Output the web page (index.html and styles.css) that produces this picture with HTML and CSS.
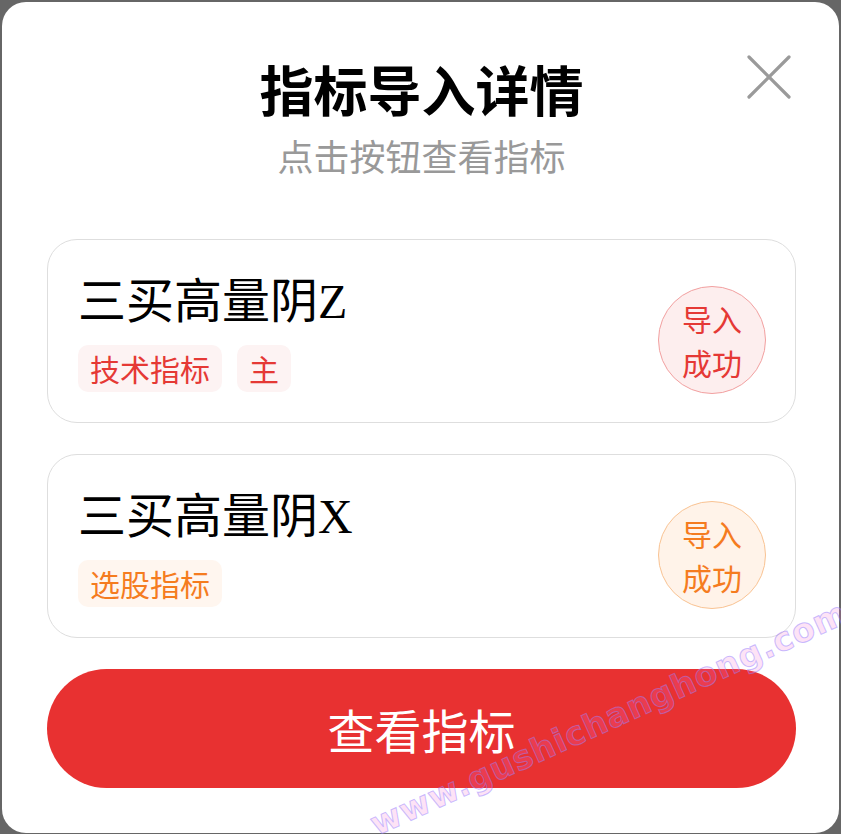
FILE: index.html
```html
<!DOCTYPE html>
<html lang="zh">
<head>
    <meta charset="UTF-8">
    <meta name="viewport" content="width=device-width, initial-scale=1.0">
    <title>指标导入详情</title>
    <link rel="stylesheet" href="styles.css">
</head>
<body>
    <div class="modal">
        <button class="close" aria-label="关闭">
            <svg width="44" height="44" viewBox="0 0 44 44">
                <path d="M2 2 L42 42 M42 2 L2 42" stroke="#9a9a9a" stroke-width="3.2" stroke-linecap="round" fill="none"/>
            </svg>
        </button>
        <h1 class="title">指标导入详情</h1>
        <p class="subtitle">点击按钮查看指标</p>

        <div class="card">
            <div class="info">
                <div class="name">三买高量阴Z</div>
                <div class="tags">
                    <span class="tag red">技术指标</span>
                    <span class="tag red">主</span>
                </div>
            </div>
            <div class="badge red">导入<br>成功</div>
        </div>

        <div class="card">
            <div class="info">
                <div class="name">三买高量阴X</div>
                <div class="tags">
                    <span class="tag orange">选股指标</span>
                </div>
            </div>
            <div class="badge orange">导入<br>成功</div>
        </div>

        <button class="view-btn">查看指标</button>
    </div>
    <div class="watermark">www.gushichanghong.com</div>
</body>
</html>
```

FILE: styles.css
```css
body {
    margin: 0;
    background-color: #666;
    font-family: "Noto Sans CJK SC", "Noto Sans", sans-serif;
    overflow: hidden;
}
.modal {
    position: relative;
    box-sizing: border-box;
    width: 837px;
    height: 831px;
    margin: 2px 0 0 2px;
    padding: 54px 43px 0 45px;
    background-color: #fff;
    border-radius: 24px;
}
.close {
    position: absolute;
    top: 53px;
    right: 48px;
    width: 44px;
    height: 44px;
    padding: 0;
    border: none;
    background: none;
}
.close svg {
    display: block;
}
.title {
    margin: 0;
    text-align: center;
    font-size: 54px;
    line-height: 65px;
    font-weight: 700;
    color: #000;
}
.subtitle {
    margin: 13px 0 0;
    text-align: center;
    font-size: 36px;
    line-height: 43px;
    color: #999;
}
.card {
    display: flex;
    align-items: center;
    justify-content: space-between;
    box-sizing: border-box;
    height: 184px;
    margin-top: 62px;
    padding: 32px 29px 30px 30px;
    border: 1px solid #dedede;
    border-radius: 30px;
}
.card + .card {
    margin-top: 31px;
}
.name {
    font-family: "Liberation Serif", "Noto Sans CJK SC", serif;
    font-size: 48px;
    line-height: 58px;
    color: #000;
}
.tags {
    display: flex;
    gap: 15px;
    margin-top: 14px;
}
.tag {
    padding: 0 12px;
    height: 47px;
    line-height: 47px;
    font-size: 30px;
    border-radius: 10px;
}
.tag.red {
    color: #e53935;
    background-color: #fdf3f3;
}
.tag.orange {
    color: #f57c1f;
    background-color: #fff6ef;
}
.badge {
    box-sizing: border-box;
    width: 108px;
    height: 108px;
    margin-top: 16px;
    padding-top: 9px;
    border-radius: 50%;
    text-align: center;
    font-size: 30px;
    line-height: 44px;
}
.badge.red {
    color: #e53935;
    background-color: #fdeeee;
    border: 1px solid #f2a0a0;
}
.badge.orange {
    color: #f57c1f;
    background-color: #fff3e9;
    border: 1px solid #f9c393;
}
.view-btn {
    display: block;
    width: 100%;
    height: 119px;
    margin-top: 31px;
    border: none;
    border-radius: 60px;
    background-color: #e83131;
    color: #fff;
    font-family: "Noto Sans CJK SC", sans-serif;
    font-size: 47px;
}
.watermark {
    position: absolute;
    left: 609px;
    top: 718px;
    transform: translate(-50%, -50%) rotate(-24.4deg);
    white-space: nowrap;
    font-family: "DejaVu Sans", sans-serif;
    font-weight: 700;
    font-size: 33px;
    letter-spacing: 1px;
    color: rgba(245, 110, 210, 0.2);
    -webkit-text-stroke: 1px rgba(150, 130, 255, 0.5);
    pointer-events: none;
}
```
